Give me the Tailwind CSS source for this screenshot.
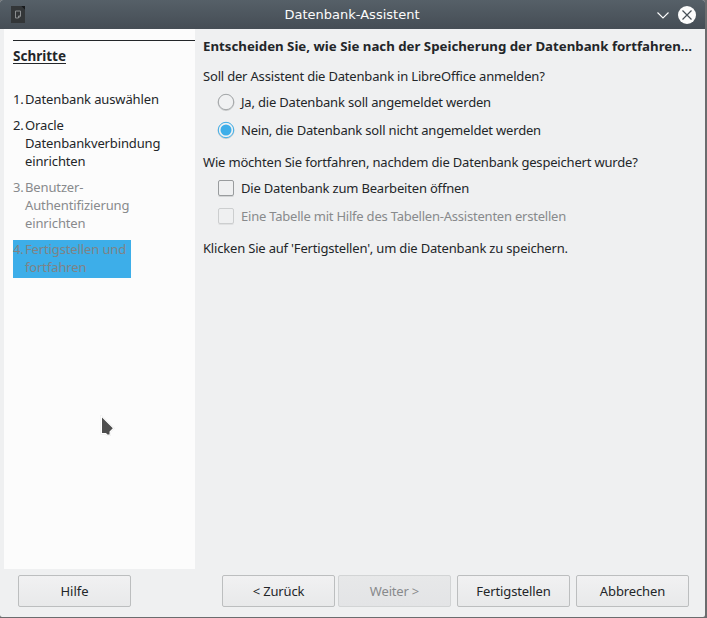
<!DOCTYPE html>
<html lang="de">
<head>
<meta charset="utf-8">
<title>Datenbank-Assistent</title>
<script src="https://cdn.jsdelivr.net/npm/@tailwindcss/browser@4"></script>
</head>
<body class="w-[707px] h-[618px] overflow-hidden bg-[#6b6c6e] font-['Noto_Sans',sans-serif] text-[13px] leading-[18px] text-[#232629]">
<div class="w-[705px] h-[617px] flex flex-col bg-[#eff0f1] rounded-t-[3px] rounded-b-[2px] overflow-hidden">
  <header class="h-[29px] shrink-0 flex items-center bg-linear-to-b from-[#566068] to-[#454d55] pl-[11px] pr-[9px]">
    <svg class="w-[14px] h-[17px] shrink-0" viewBox="0 0 14 17" fill="none">
      <path d="M0 0H10L14 4V17H0Z" fill="#333638"/><path d="M10 0H14V4Z" fill="#17191b"/>
      <path d="M4.500 5H9.500V10L7.500 12H4.500Z" stroke="#8b8e90"/><path d="M7.500 12V10H9.500" stroke="#8b8e90"/>
    </svg>
    <h1 class="flex-1 pl-[22px] text-center text-[13px] text-[#fcfcfc] font-['DejaVu_Sans',sans-serif]"><span>Datenbank-Assistent</span></h1>
    <svg class="w-[39px] h-[18px] shrink-0" viewBox="0 0 39 18" fill="none">
      <path d="M.5 6.500L6 12L11.500 6.500" stroke="#fcfcfc" stroke-width="1.1"/>
      <circle cx="30" cy="9" r="9" fill="#fcfcfc"/>
      <path d="M25.500 4.500L34.500 13.500M34.500 4.500L25.500 13.500" stroke="#475057" stroke-width="1.2"/>
    </svg>
  </header>
  <div class="flex h-[540px] shrink-0">
    <aside class="ml-1 w-[191px] shrink-0 bg-[#fcfcfc] pt-[11px] pl-[9px]">
      <div class="h-px bg-[#232629]"></div>
      <h2 class="mt-[6px] w-[53px] h-[17px] leading-[18px] border-b border-[#232629] font-bold text-[13.5px] whitespace-nowrap">Schritte</h2>
      <ol class="mt-[26px] w-[155px] tracking-[-0.13px]">
        <li class="flex"><span class="w-3 shrink-0">1.</span><span class="whitespace-nowrap">Datenbank auswählen</span></li>
        <li class="flex mt-2"><span class="w-3 shrink-0">2.</span><span>Oracle<br>Datenbankverbindung<br>einrichten</span></li>
        <li class="flex mt-2 text-[#888a8c]"><span class="w-3 shrink-0">3.</span><span>Benutzer-<br>Authentifizierung<br>einrichten</span></li>
        <li class="flex mt-[8px] w-[118px] h-[38px] bg-[#3daee9] text-[#7f8386]"><span class="w-3 shrink-0">4.</span><span class="whitespace-nowrap">Fertigstellen und<br>fortfahren</span></li>
      </ol>
    </aside>
    <main class="pl-2 pt-[8px] whitespace-nowrap tracking-[-0.185px]">
      <h2 class="font-bold text-[13.25px] tracking-normal">Entscheiden Sie, wie Sie nach der Speicherung der Datenbank fortfahren...</h2>
      <p class="mt-3">Soll der Assistent die Datenbank in LibreOffice anmelden?</p>
      <div class="mt-2 ml-[14px] flex items-center gap-[6px]">
        <svg class="w-[18px] h-[18px]" viewBox="0 0 18 18"><circle cx="9" cy="9.500" r="8" fill="none" stroke="#c8cacb"/><circle cx="9" cy="9" r="7.700" fill="#f0f1f2" stroke="#a2a5a7"/></svg>
        <span>Ja, die Datenbank soll angemeldet werden</span>
      </div>
      <div class="mt-[10px] ml-[14px] flex items-center gap-[6px]">
        <svg class="w-[18px] h-[18px]" viewBox="0 0 18 18"><circle cx="9" cy="9.500" r="8" fill="none" stroke="#c8cacb"/><circle cx="9" cy="9" r="7.700" fill="#f0f1f2" stroke="#3daee9"/><circle cx="9" cy="9" r="5.500" fill="#3daee9"/></svg>
        <span>Nein, die Datenbank soll nicht angemeldet werden</span>
      </div>
      <p class="mt-[14px]">Wie möchten Sie fortfahren, nachdem die Datenbank gespeichert wurde?</p>
      <div class="mt-2 ml-[15px] flex items-center gap-[7px]">
        <span class="w-[16px] h-[16px] rounded-[2px] border border-[#999c9e] shadow-[0_1px_0_#d2d4d5]"></span>
        <span>Die Datenbank zum Bearbeiten öffnen</span>
      </div>
      <div class="mt-[10px] ml-[15px] flex items-center gap-[7px] text-[#888a8c]">
        <span class="w-[16px] h-[16px] rounded-[2px] border border-[#cccecf] shadow-[0_1px_0_#e0e1e2]"></span>
        <span class="tracking-[-0.22px]">Eine Tabelle mit Hilfe des Tabellen-Assistenten erstellen</span>
      </div>
      <p class="mt-[14px]">Klicken Sie auf 'Fertigstellen', um die Datenbank zu speichern.</p>
    </main>
  </div>
  <footer class="flex pt-[6px] pl-[18px]">
    <button class="w-[113px] h-8 rounded-[2px] border border-[#bcbebf] bg-linear-to-b from-[#f1f1f2] to-[#e8e9ea]">Hilfe</button>
    <button class="ml-[91px] w-[113px] h-8 rounded-[2px] border border-[#bcbebf] bg-linear-to-b from-[#f1f1f2] to-[#e8e9ea] tracking-[-0.18px]">&lt; Zurück</button>
    <button class="ml-[3px] w-[113px] h-8 rounded-[2px] border border-[#d2d4d5] bg-linear-to-b from-[#e7e8e9] to-[#e3e4e6] text-[#888a8c] tracking-[-0.18px]" disabled>Weiter &gt;</button>
    <button class="ml-[6px] w-[113px] h-8 rounded-[2px] border border-[#bcbebf] bg-linear-to-b from-[#f1f1f2] to-[#e8e9ea] tracking-[-0.12px]">Fertigstellen</button>
    <button class="ml-[6px] w-[113px] h-8 rounded-[2px] border border-[#bcbebf] bg-linear-to-b from-[#f1f1f2] to-[#e8e9ea] tracking-[-0.12px]">Abbrechen</button>
  </footer>
</div>
<svg class="absolute left-[99px] top-[415px] w-[17px] h-[24px]" viewBox="0 0 17 24"><path d="M3 2.500L13.800 13.300L10.500 16.500V19.500H8.500L7 18H3Z" fill="none" opacity=".07" stroke="#000" stroke-width="3"/><path d="M3 2.500L13.800 13.300L10.500 16.500V19.500H8.500L7 18H3Z" fill="#4d4d4d" stroke="#fff" stroke-width="2" paint-order="stroke"/></svg>
</body>
</html>
